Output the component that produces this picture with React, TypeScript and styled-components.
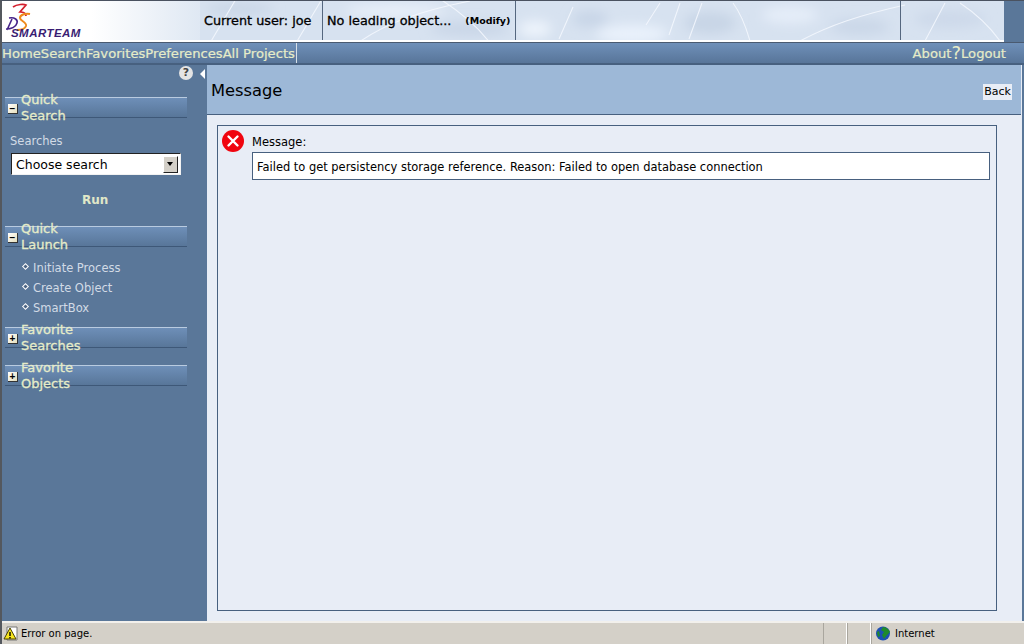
import styled, { createGlobalStyle } from "styled-components";

const uiFont = `"DejaVu Sans", "Noto Sans", sans-serif`;

const GlobalStyle = createGlobalStyle`
  html, body {
    margin: 0;
    padding: 0;
    height: 100%;
    overflow: hidden;
    background: #5a7799;
  }
  * {
    box-sizing: border-box;
  }
`;

function App() {
  return (
    <Page>
      <GlobalStyle />
      <Header>
        <HeaderTexture />
        <LogoCell>
          <LogoMark />
          <LogoText>SMARTEAM</LogoText>
        </LogoCell>
        <InfoCell width={123}>
          <InfoText>Current user: joe</InfoText>
        </InfoCell>
        <InfoCell width={193}>
          <InfoText>No leading object...</InfoText>
          <ModifyLink>(Modify)</ModifyLink>
        </InfoCell>
        <InfoCell width={385} />
        <InfoCell width={105} />
      </Header>
      <NavBar>
        <NavLeft>
          <NavLink>Home</NavLink>
          <NavLink>Search</NavLink>
          <NavLink>Favorites</NavLink>
          <NavLink>Preferences</NavLink>
          <NavLink>All Projects</NavLink>
        </NavLeft>
        <NavRight>
          <NavLink>About</NavLink>
          <HelpMark>?</HelpMark>
          <NavLink>Logout</NavLink>
        </NavRight>
      </NavBar>
      <Body>
        <Sidebar>
          <SideTools>
            <HelpBadge>?</HelpBadge>
            <CollapseArrow />
          </SideTools>
          <SectionBand>
            <ToggleBox>−</ToggleBox>
            <SectionTitle>Quick Search</SectionTitle>
          </SectionBand>
          <SearchForm>
            <FieldLabel>Searches</FieldLabel>
            <SelectBox>
              <SelectValue>Choose search</SelectValue>
              <SelectButton />
            </SelectBox>
            <RunLink>Run</RunLink>
          </SearchForm>
          <SectionBand>
            <ToggleBox>−</ToggleBox>
            <SectionTitle>Quick Launch</SectionTitle>
          </SectionBand>
          <LaunchList>
            {["Initiate Process", "Create Object", "SmartBox"].map((item) => (
              <LaunchItem key={item}>
                <Diamond />
                {item}
              </LaunchItem>
            ))}
          </LaunchList>
          <SectionBand>
            <ToggleBox>+</ToggleBox>
            <SectionTitle>Favorite Searches</SectionTitle>
          </SectionBand>
          <SectionGap />
          <SectionBand>
            <ToggleBox>+</ToggleBox>
            <SectionTitle>Favorite Objects</SectionTitle>
          </SectionBand>
        </Sidebar>
        <Main>
          <TitleBand>
            <PageTitle>Message</PageTitle>
            <BackButton>Back</BackButton>
          </TitleBand>
          <Content>
            <MessagePanel>
              <ErrorIcon viewBox="0 0 22 22">
                <circle cx="11" cy="11" r="11" fill="#f0050f" />
                <path
                  d="M6.5 6.5 L15.5 15.5 M15.5 6.5 L6.5 15.5"
                  stroke="#fff"
                  strokeWidth="2.4"
                  strokeLinecap="round"
                />
              </ErrorIcon>
              <MessageBody>
                <MessageLabel>Message:</MessageLabel>
                <MessageBox>
                  Failed to get persistency storage reference. Reason: Failed to
                  open database connection
                </MessageBox>
              </MessageBody>
            </MessagePanel>
          </Content>
        </Main>
      </Body>
      <StatusBar>
        <StatusMain>
          <svg width="16" height="15" viewBox="0 0 16 15">
            <path d="M4 1 H14 V14 H4 Z" fill="#fff" stroke="#777" />
            <path d="M7 2 L13 13 H1 Z" fill="#f6e51e" stroke="#4a4300" />
            <path d="M7 6 V10 M7 11 V12.5" stroke="#000" strokeWidth="1.4" />
          </svg>
          <StatusText>Error on page.</StatusText>
        </StatusMain>
        <StatusSlot width={24} />
        <StatusSlot width={24} />
        <StatusZone>
          <svg width="16" height="15" viewBox="0 0 16 15">
            <circle cx="8" cy="7.5" r="7" fill="#1d4fb3" />
            <path
              d="M8 1 C11 1 14 3 15 6 L12 9 L9 13 L7 9 L9 6 L6 4 Z"
              fill="#1f8a2c"
            />
            <path d="M2 6 L4 5 L5 10 L3 11 Z" fill="#1f8a2c" />
          </svg>
          <StatusText>Internet</StatusText>
        </StatusZone>
      </StatusBar>
    </Page>
  );
}

// coordinates are page pixels, the mark sits in the top left corner
function LogoMark() {
  return (
    <LogoSvg viewBox="0 0 34 32">
      <path
        d="M13 7 C17 4 24 4 26 5 L20 12 C23 12 26 13 26 16"
        fill="none"
        stroke="#d3202e"
        strokeWidth="1.7"
      />
      <path
        d="M30 14 C25 13 20 15 20 18 C20 21 27 22 26 26 C25 29 21 30 17 30"
        fill="none"
        stroke="#ee8a1c"
        strokeWidth="2"
      />
      <path
        d="M7 30 L12 19 M9 18 C15 17 18 20 17 23 C16 27 11 29 6 29"
        fill="none"
        stroke="#46248a"
        strokeWidth="1.6"
      />
    </LogoSvg>
  );
}

function HeaderTexture() {
  return (
    <TextureSvg viewBox="200 0 806 39">
      <defs>
        <filter id="soften" x="-30%" y="-100%" width="160%" height="300%">
          <feGaussianBlur stdDeviation="6" />
        </filter>
      </defs>
      <g filter="url(#soften)">
        <ellipse cx="240" cy="8" rx="34" ry="6" fill="#c9d6e6" />
        <ellipse cx="395" cy="10" rx="50" ry="6" fill="#eaf1fa" />
        <ellipse cx="470" cy="28" rx="40" ry="7" fill="#c9d6e7" />
        <ellipse cx="535" cy="28" rx="16" ry="8" fill="#eef4fc" />
        <ellipse cx="590" cy="18" rx="18" ry="8" fill="#c8d5e7" />
        <ellipse cx="632" cy="33" rx="36" ry="9" fill="#eaf2fc" />
        <ellipse cx="710" cy="22" rx="26" ry="11" fill="#c8d5e6" />
        <ellipse cx="790" cy="14" rx="28" ry="8" fill="#e6eef9" />
        <ellipse cx="860" cy="26" rx="30" ry="8" fill="#cad7e8" />
        <ellipse cx="950" cy="18" rx="36" ry="9" fill="#cdd9ea" />
      </g>
      <path
        d="M210 42 L236 -2 M296 42 L322 -2 M355 44 C385 22 420 10 470 0 M440 -2 C462 12 478 26 490 42 M559 38 L573 6 M646 24 L660 2 M669 34 L680 2 M689 38 L702 2 M733 2 C742 14 746 26 750 40 M800 40 C830 24 860 14 905 4 M925 40 L945 2 M960 2 C975 12 990 26 1000 40"
        fill="none"
        stroke="#f4f8fe"
        strokeWidth="1.1"
        opacity="0.85"
      />
    </TextureSvg>
  );
}

const Page = styled.div`
  width: 1024px;
  height: 644px;
  display: flex;
  flex-direction: column;
  background: #5a7799;
  border-left: 2px solid #54585e;
  border-top: 1px solid #4a5260;
  font-family: ${uiFont};
  overflow: hidden;
`;

const Header = styled.header`
  position: relative;
  display: flex;
  flex: none;
  width: 1004px;
  height: 41px;
  margin-left: -2px;
  padding-left: 2px;
  border-bottom: 2px solid #fff;
  background: #d7e2f0;
`;

const LogoCell = styled.div`
  position: relative;
  width: 198px;
  flex: none;
  background: linear-gradient(90deg, #fff 45%, #dfe8f3 100%);
`;

const LogoSvg = styled.svg`
  position: absolute;
  left: -2px;
  top: -1px;
  width: 34px;
  height: 32px;
`;

const LogoText = styled.span`
  position: absolute;
  left: 9px;
  top: 26px;
  font: italic 700 11.5px "Liberation Sans", sans-serif;
  letter-spacing: 0.45px;
  color: #3a1d73;
`;

const InfoCell = styled.div<{ width: number }>`
  position: relative;
  display: flex;
  align-items: center;
  flex: none;
  width: ${(props) => props.width}px;
  padding-left: 4px;
  border-right: 1px solid #55677f;
  &:last-child {
    border-right: 0;
  }
`;

const TextureSvg = styled.svg`
  position: absolute;
  left: 200px;
  top: 0;
  width: 806px;
  height: 39px;
`;

const InfoText = styled.span`
  position: relative;
  font-size: 12.8px;
  -webkit-text-stroke: 0.3px #000;
  color: #000;
  white-space: nowrap;
`;

const ModifyLink = styled.span`
  position: relative;
  margin-left: 14px;
  font-size: 9.5px;
  font-weight: 700;
  color: #000;
`;

const NavBar = styled.nav`
  display: flex;
  flex: none;
  align-items: center;
  justify-content: space-between;
  height: 23px;
  margin-left: -2px;
  padding-right: 18px;
  border-top: 1px solid #4a5a70;
  border-bottom: 2px solid #47607f;
  background: linear-gradient(#6f90b9, #587599);
`;

const NavLeft = styled.div`
  display: flex;
  height: 100%;
  align-items: center;
  padding-left: 2px;
  padding-right: 1px;
  border-right: 1px solid #d6dfe8;
`;

const NavRight = styled.div`
  display: flex;
  align-items: center;
`;

const NavLink = styled.a`
  font-size: 13.15px;
  -webkit-text-stroke: 0.2px #e6ecc8;
  color: #e6ecc8;
  white-space: nowrap;
`;

const HelpMark = styled.span`
  font-size: 18px;
  line-height: 16px;
  color: #e6ecc8;
`;

const Body = styled.div`
  display: flex;
  flex: 1;
  min-height: 0;
`;

const Sidebar = styled.aside`
  width: 205px;
  flex: none;
  background: #5a7799;
  padding-right: 20px;
`;

const SideTools = styled.div`
  position: relative;
  height: 32px;
`;

const HelpBadge = styled.span`
  position: absolute;
  left: 177px;
  top: 1px;
  width: 14px;
  height: 14px;
  border-radius: 50%;
  background: #e4e4e4;
  color: #444;
  font-size: 11px;
  font-weight: 700;
  line-height: 14px;
  text-align: center;
`;

const CollapseArrow = styled.span`
  position: absolute;
  left: 198px;
  top: 4px;
  border-style: solid;
  border-width: 5px 5px 5px 0;
  border-color: transparent #fff transparent transparent;
`;

const SectionBand = styled.div`
  display: flex;
  align-items: center;
  height: 21px;
  margin-left: 3px;
  padding-left: 3px;
  border-top: 1px solid #b9cbe0;
  border-bottom: 1px solid #3e5878;
  background: linear-gradient(#6e8fb8, #587699);
`;

const ToggleBox = styled.span`
  flex: none;
  width: 10px;
  height: 10px;
  margin-top: 3px;
  margin-right: 3px;
  background: linear-gradient(135deg, #fff, #e6dfbc);
  border-right: 1px solid #333;
  border-bottom: 1px solid #333;
  color: #000;
  font: 700 10px/9px "Liberation Sans", sans-serif;
  text-align: center;
`;

const SectionTitle = styled.span`
  width: 60px;
  font-size: 13px;
  -webkit-text-stroke: 0.3px #e6ecc8;
  line-height: 16px;
  color: #e6ecc8;
`;

const SearchForm = styled.div`
  height: 108px;
  padding-top: 15px;
  padding-left: 8px;
`;

const FieldLabel = styled.div`
  height: 18px;
  font-size: 11.5px;
  line-height: 16px;
  color: #d2dbe6;
`;

const SelectBox = styled.div`
  display: flex;
  align-items: center;
  justify-content: space-between;
  width: 170px;
  height: 22px;
  padding: 2px;
  margin-top: 2px;
  margin-left: 1px;
  border-top: 1px solid #222;
  border-left: 1px solid #222;
  border-right: 1px solid #f2f2f2;
  border-bottom: 1px solid #f2f2f2;
  background: #fff;
`;

const SelectValue = styled.span`
  padding-left: 2px;
  font-size: 12.5px;
  color: #000;
`;

const SelectButton = styled.span`
  position: relative;
  width: 15px;
  height: 17px;
  background: #d4d0c8;
  border: 1px solid;
  border-color: #fff #222 #222 #fff;
  &::after {
    content: "";
    position: absolute;
    left: 3px;
    top: 5px;
    border-style: solid;
    border-width: 4px 3.5px 0;
    border-color: #000 transparent transparent;
  }
`;

const RunLink = styled.div`
  margin-top: 18px;
  padding-left: 72px;
  font-size: 12px;
  font-weight: 700;
  color: #e0e8c8;
`;

const LaunchList = styled.ul`
  list-style: none;
  margin: 0;
  height: 80px;
  padding: 11px 0 0 20px;
`;

const LaunchItem = styled.li`
  display: flex;
  align-items: center;
  height: 20px;
  font-size: 11.5px;
  color: #d2dbe6;
`;

const Diamond = styled.span`
  width: 5px;
  height: 5px;
  margin: -3px 5px 0 1px;
  transform: rotate(45deg);
  border: 1px solid #fff;
  background: #4b6484;
`;

const SectionGap = styled.div`
  height: 17px;
`;

const Main = styled.main`
  display: flex;
  flex-direction: column;
  flex: none;
  width: 815px;
  border-right: 1px solid #e8edf6;
`;

const TitleBand = styled.div`
  display: flex;
  flex: none;
  align-items: center;
  justify-content: space-between;
  height: 50px;
  padding: 2px 9px 0 4px;
  background: #9db8d7;
  border-bottom: 1px solid #47607f;
`;

const PageTitle = styled.h1`
  margin: 0;
  font-size: 16.3px;
  font-weight: 400;
  color: #000;
`;

const BackButton = styled.a`
  margin-top: 3px;
  padding: 0 1px;
  background: #e8edf6;
  font-size: 11px;
  line-height: 16px;
  color: #000;
`;

const Content = styled.div`
  flex: none;
  height: 506px;
  padding: 10px 24px 10px 10px;
  background: #e8edf6;
`;

const MessagePanel = styled.section`
  display: flex;
  gap: 8px;
  height: 100%;
  padding: 4px 6px 0 4px;
  border: 1px solid #47607f;
`;

const ErrorIcon = styled.svg`
  flex: none;
  width: 22px;
  height: 22px;
`;

const MessageBody = styled.div`
  flex: 1;
`;

const MessageLabel = styled.div`
  height: 22px;
  padding-top: 4px;
  font-size: 11.5px;
  line-height: 16px;
  color: #000;
`;

const MessageBox = styled.div`
  height: 28px;
  padding-left: 4px;
  border: 1px solid #47607f;
  background: #fff;
  font-size: 11.45px;
  line-height: 28px;
  color: #000;
  white-space: nowrap;
`;

const StatusBar = styled.footer`
  display: flex;
  flex: none;
  height: 23px;
  margin-left: -2px;
  border-top: 2px solid #f2f0ec;
  background: #d4d0c8;
`;

const StatusMain = styled.div`
  display: flex;
  flex: 1;
  align-items: center;
  gap: 2px;
  padding-left: 3px;
`;

const StatusSlot = styled.div<{ width: number }>`
  width: ${(props) => props.width}px;
  border-left: 1px solid #a9a69e;
  border-right: 1px solid #fff;
`;

const StatusZone = styled.div`
  display: flex;
  align-items: center;
  gap: 4px;
  width: 153px;
  padding-left: 3px;
  border-left: 1px solid #a9a69e;
`;

const StatusText = styled.span`
  font-family: "DejaVu Sans", sans-serif;
  font-size: 10px;
  color: #000;
`;

export default App;
